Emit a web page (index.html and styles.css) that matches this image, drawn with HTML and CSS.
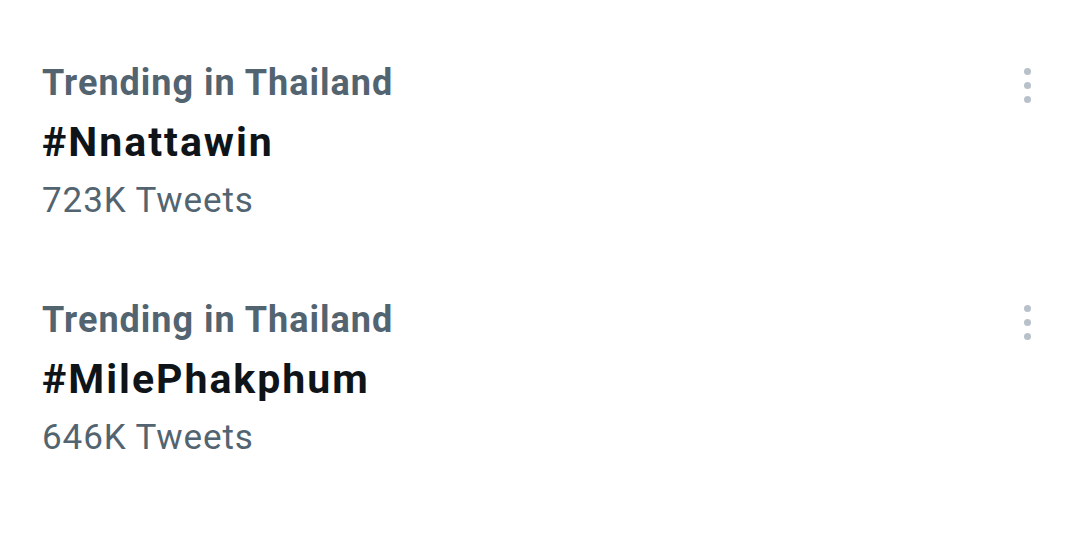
FILE: index.html
```html
<!DOCTYPE html>
<html>
<head>
<meta charset="utf-8">
<link rel="stylesheet" href="styles.css">
</head>
<body>
<div class="list">
  <div class="trend">
    <div class="info">
      <div class="context">Trending in Thailand</div>
      <div class="tag">#Nnattawin</div>
      <div class="count">723K Tweets</div>
    </div>
    <div class="more"><span></span><span></span><span></span></div>
  </div>
  <div class="trend">
    <div class="info">
      <div class="context">Trending in Thailand</div>
      <div class="tag">#MilePhakphum</div>
      <div class="count">646K Tweets</div>
    </div>
    <div class="more"><span></span><span></span><span></span></div>
  </div>
</div>
</body>
</html>
```
FILE: styles.css
```css
html, body { margin: 0; padding: 0; background: #fff; }
body { font-family: Roboto, "Noto Sans", sans-serif; width: 1079px; height: 538px; overflow: hidden; }
.list { display: flex; flex-direction: column; padding: 60px 0 0 42px; }
.trend { display: flex; justify-content: space-between; height: 237px; padding-right: 48px; }
.info { display: flex; flex-direction: column; }
.context { font-size: 36px; font-weight: 700; color: #536471; line-height: 46px; letter-spacing: 1px; }
.tag { font-size: 41px; font-weight: 700; color: #0f1419; line-height: 66px; letter-spacing: 2px; margin-top: 3px; }
.count { font-size: 35px; color: #536471; line-height: 52px; letter-spacing: 0.9px; }
.more { display: flex; flex-direction: column; gap: 7px; padding-top: 8px; }
.more span { width: 7px; height: 7px; border-radius: 50%; background: #b8c1c9; }
```
